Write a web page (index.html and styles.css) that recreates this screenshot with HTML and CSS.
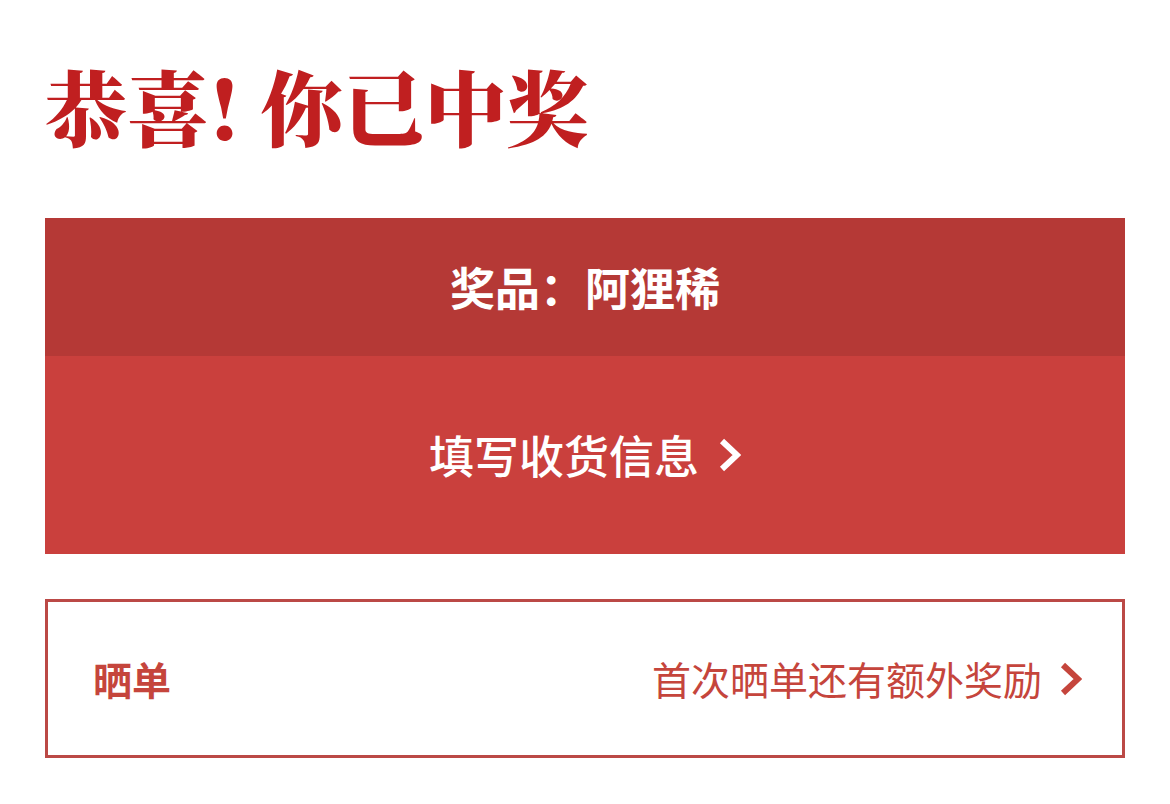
FILE: index.html
```html
<!DOCTYPE html>
<html lang="zh-CN">
<head>
<meta charset="utf-8">
<meta name="viewport" content="width=device-width, initial-scale=1">
<title>恭喜!你已中奖</title>
<link rel="stylesheet" href="styles.css">
</head>
<body>
<main class="page">
  <h1 class="title">恭喜! 你已中奖</h1>
  <section class="prize">
    <h2 class="prize-name">奖品：阿狸稀</h2>
    <a class="prize-action" href="#address">
      <span>填写收货信息</span>
      <svg class="chevron" viewBox="0 0 22 34" aria-hidden="true"><path d="M3 3 L18 17 L3 31"/></svg>
    </a>
  </section>
  <a class="share" href="#share">
    <strong class="share-title">晒单</strong>
    <span class="share-note">首次晒单还有额外奖励</span>
    <svg class="chevron" viewBox="0 0 22 34" aria-hidden="true"><path d="M3 3 L18 17 L3 31"/></svg>
  </a>
</main>
</body>
</html>
```

FILE: styles.css
```css
* {
  box-sizing: border-box;
}

body {
  margin: 0;
  background: #fff;
  font-family: "Noto Sans CJK SC", sans-serif;
}

.page {
  padding: 45px;
}

.title {
  margin: 0 0 53px;
  color: #c01f20;
  font-family: "Noto Serif CJK SC", "Noto Sans CJK SC", serif;
  font-size: 82px;
  font-weight: 900;
  line-height: 120px;
}

.prize {
  margin-bottom: 45px;
  background: #ca403d;
  color: #fff;
  font-size: 45px;
  text-align: center;
}

.prize-name {
  margin: 0;
  padding: 36px 45px;
  background: #b53936;
  font-size: 45px;
  font-weight: 700;
  line-height: 66px;
}

.prize-action {
  display: flex;
  align-items: center;
  justify-content: center;
  gap: 20px;
  padding: 66px 45px;
  color: inherit;
  font-weight: 500;
  line-height: 66px;
  text-decoration: none;
}

.chevron {
  flex: none;
  width: 22px;
  height: 34px;
  fill: none;
  stroke: currentColor;
  stroke-width: 6;
}

.share {
  display: flex;
  align-items: center;
  gap: 18px;
  padding: 46px 40px 46px 45px;
  border: 3px solid #bb4946;
  color: #c5453c;
  font-size: 39px;
  line-height: 61px;
  text-decoration: none;
}

.share-title {
  font-weight: 700;
}

.share-note {
  margin-left: auto;
}
```
